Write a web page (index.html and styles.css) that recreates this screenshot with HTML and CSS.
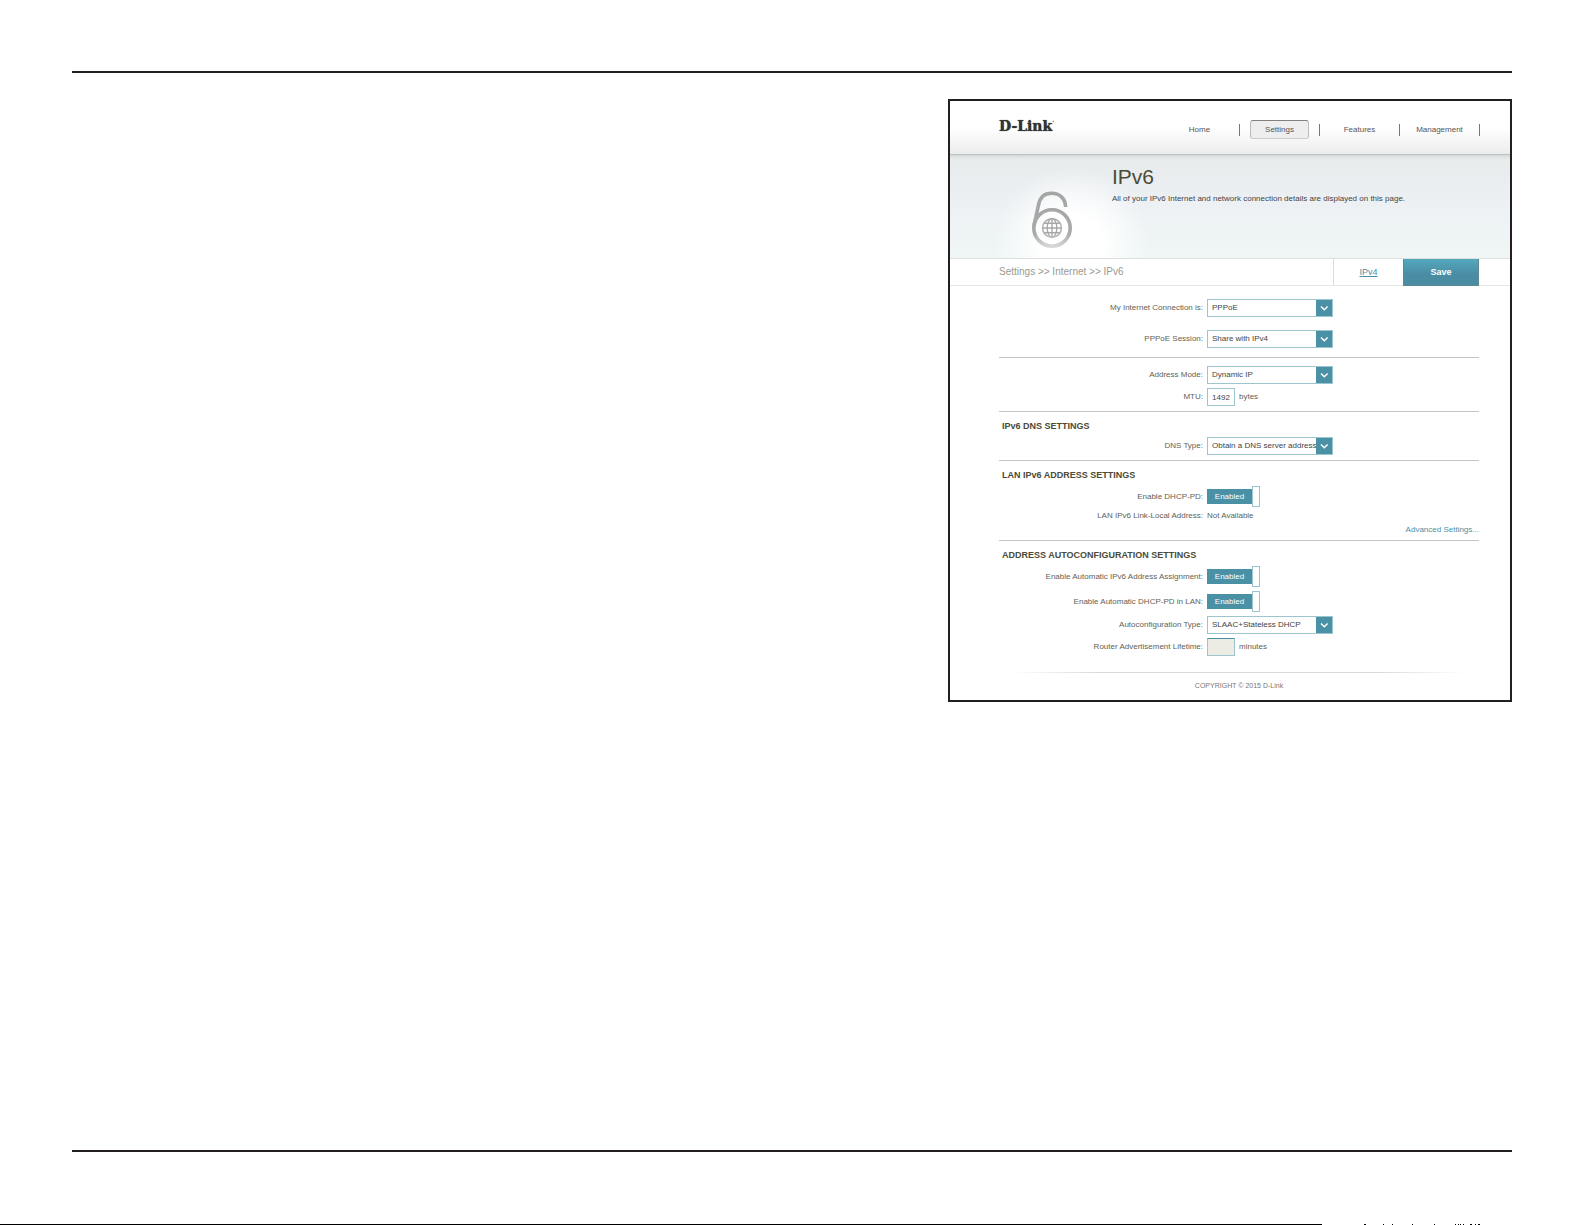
FILE: index.html
```html
<!DOCTYPE html>
<html lang="en">
<head>
<meta charset="UTF-8">
<meta name="viewport" content="width=device-width, initial-scale=1.0">
<title>IPv6</title>
<link rel="stylesheet" href="styles.css">
</head>
<body>
<svg class="defs" width="0" height="0" aria-hidden="true">
    <symbol id="chevron" viewBox="0 0 16 16"><path d="M5 6.5l3.3 3.3 3.3-3.3" fill="none" stroke="#fff" stroke-width="1.4"/></symbol>
</svg>
<main class="page">
<div class="panel">
    <header class="header">
        <a href="#" class="logo">D-Link<sup>’</sup></a>
        <nav>
            <ul class="nav">
                <li><a href="#">Home</a></li>
                <li><a href="#" class="active">Settings</a></li>
                <li><a href="#">Features</a></li>
                <li><a href="#">Management</a></li>
            </ul>
        </nav>
    </header>

    <div class="banner">
        <svg class="banner-icon" viewBox="0 0 40 57" aria-hidden="true">
            <defs>
                <linearGradient id="fade" gradientUnits="userSpaceOnUse" x1="0" y1="0" x2="0" y2="57">
                    <stop offset="0" stop-color="#a5a5a5"/>
                    <stop offset="0.75" stop-color="#a9a9a9"/>
                    <stop offset="1" stop-color="#dcdcdc"/>
                </linearGradient>
            </defs>
            <g fill="none" stroke="url(#fade)">
                <circle cx="20" cy="37" r="18.2" stroke-width="3.6"/>
                <path d="M2 35L6.5 14C8 6 13 2.3 19.5 2.3C28 2.3 33.5 8 33.6 16" stroke-width="3.6"/>
                <g stroke-width="1.4">
                    <circle cx="20" cy="37" r="9.4"/>
                    <ellipse cx="20" cy="37" rx="4.8" ry="9.4"/>
                    <path d="M20 27.6V46.4M10.6 37H29.4M12.2 32.2H27.8M12.2 41.8H27.8"/>
                </g>
            </g>
        </svg>
        <div>
            <h1>IPv6</h1>
            <p>All of your IPv6 Internet and network connection details are displayed on this page.</p>
        </div>
    </div>

    <div class="toolbar">
        <div class="crumbs">Settings &gt;&gt; Internet &gt;&gt; IPv6</div>
        <a href="#" class="ipv4-link"><span>IPv4</span></a>
        <button type="button" class="save-btn">Save</button>
    </div>

    <form class="settings">
        <section class="group group-connection">
            <div class="row">
                <label for="connection">My Internet Connection is:</label>
                <div class="select"><select id="connection"><option>PPPoE</option></select><svg><use href="#chevron"/></svg></div>
            </div>
            <div class="row">
                <label for="session">PPPoE Session:</label>
                <div class="select"><select id="session"><option>Share with IPv4</option></select><svg><use href="#chevron"/></svg></div>
            </div>
        </section>

        <section class="group">
            <div class="row">
                <label for="mode">Address Mode:</label>
                <div class="select"><select id="mode"><option>Dynamic IP</option></select><svg><use href="#chevron"/></svg></div>
            </div>
            <div class="row">
                <label for="mtu">MTU:</label>
                <div class="field"><input type="text" id="mtu" value="1492"> bytes</div>
            </div>
        </section>

        <section class="group">
            <h2>IPv6 DNS SETTINGS</h2>
            <div class="row">
                <label for="dns">DNS Type:</label>
                <div class="select"><select id="dns"><option>Obtain a DNS server address</option></select><svg><use href="#chevron"/></svg></div>
            </div>
        </section>

        <section class="group">
            <h2>LAN IPv6 ADDRESS SETTINGS</h2>
            <div class="row">
                <label for="dhcppd">Enable DHCP-PD:</label>
                <div class="toggle"><span>Enabled</span><input type="checkbox" id="dhcppd" checked></div>
            </div>
            <div class="row">
                <span class="name">LAN IPv6 Link-Local Address:</span>
                <span class="value">Not Available</span>
            </div>
            <a href="#" class="advanced">Advanced Settings...</a>
        </section>

        <section class="group group-last">
            <h2>ADDRESS AUTOCONFIGURATION SETTINGS</h2>
            <div class="row">
                <label for="auto-address">Enable Automatic IPv6 Address Assignment:</label>
                <div class="toggle"><span>Enabled</span><input type="checkbox" id="auto-address" checked></div>
            </div>
            <div class="row">
                <label for="auto-lan">Enable Automatic DHCP-PD in LAN:</label>
                <div class="toggle"><span>Enabled</span><input type="checkbox" id="auto-lan" checked></div>
            </div>
            <div class="row">
                <label for="auto-type">Autoconfiguration Type:</label>
                <div class="select"><select id="auto-type"><option>SLAAC+Stateless DHCP</option></select><svg><use href="#chevron"/></svg></div>
            </div>
            <div class="row">
                <label for="lifetime">Router Advertisement Lifetime:</label>
                <div class="field"><input type="text" id="lifetime" disabled> minutes</div>
            </div>
        </section>
    </form>

    <footer class="copyright">COPYRIGHT © 2015 D-Link</footer>
</div>
</main>

<svg class="page-edge" viewBox="0 0 1585 1" preserveAspectRatio="none" aria-hidden="true">
    <path d="M0 0H1322V1H0zM1364 0h2v1h-2zM1383 0h1v1h-1zM1392 0h1v1h-1zM1412 0h1v1h-1zM1434 0h1v1h-1zM1455 0h1v1h-1zM1458 0h1v1h-1zM1460 0h1v1h-1zM1463 0h1v1h-1zM1470 0h2v1h-2zM1475 0h1v1h-1zM1478 0h2v1h-2z"/>
</svg>
</body>
</html>
```
FILE: styles.css
```css
* {
    box-sizing: border-box;
}
body {
    display: flex;
    flex-direction: column;
    min-height: 100vh;
    margin: 0;
    background-color: #fff;
    color: #5f5f55;
    font-family: "Liberation Sans", Arial, sans-serif;
    font-size: 8px;
    line-height: 10px;
}
h1, h2, p, ul {
    margin: 0;
    padding: 0;
}
.defs {
    position: absolute;
}
.page {
    flex: 1;
    display: grid;
    grid-template-columns: 73fr 47fr;
    align-items: start;
    margin: 71px 73px 72px 72px;
    padding: 26px 0;
    border-top: 2px solid #231f20;
    border-bottom: 2px solid #231f20;
}
.page-edge {
    display: block;
    width: 100%;
    height: 1px;
}
.panel {
    grid-column: 2;
    border: 2px solid #231f20;
}

/* Header */
.header {
    display: flex;
    justify-content: space-between;
    align-items: flex-start;
    padding: 19px 30px 15px 49px;
    background: linear-gradient(#fff 50%, #ececec);
    border-bottom: 1px solid #bcc1c1;
}
.logo {
    color: #333;
    font-family: "DejaVu Serif", serif;
    font-size: 14px;
    font-weight: bold;
    line-height: 12px;
    text-decoration: none;
    text-shadow: 0 0 1px #333;
}
.logo sup {
    font-size: 6px;
    line-height: 0;
    font-weight: normal;
}
.nav {
    display: flex;
    list-style: none;
}
.nav li {
    display: flex;
    align-items: center;
    width: 80px;
}
.nav li::after {
    content: "";
    width: 1px;
    height: 12px;
    background-color: #777;
}
.nav a {
    width: 59px;
    margin: 0 auto;
    border: 1px solid transparent;
    border-radius: 3px;
    color: #555;
    line-height: 17px;
    text-align: center;
    text-decoration: none;
}
.nav .active {
    border-color: #808080 #bbb #ccc;
    background-color: #eee;
}

/* Banner */
.banner {
    display: flex;
    gap: 40px;
    padding: 10px 31px 10px 82px;
    background: radial-gradient(circle at 122px 90px, #fff 30px, rgba(255, 255, 255, 0) 78px),
        linear-gradient(#d3d8d9, #e7ebec 4px, #edf1f4 50%, #eff6f5);
    border-bottom: 1px solid #dcdfdd;
}
.banner-icon {
    flex: none;
    width: 40px;
    height: 57px;
    margin-top: 26px;
}
.banner h1 {
    margin-bottom: 4px;
    color: #4b4b38;
    font-size: 21px;
    font-weight: normal;
    line-height: 24px;
}
.banner p {
    color: #444;
    line-height: 12px;
}

/* Breadcrumb bar */
.toolbar {
    display: flex;
    align-items: stretch;
    height: 27px;
    padding: 0 31px 0 49px;
    box-shadow: inset 0 -1px #e6e6e6;
}
.crumbs {
    flex: 1;
    color: #9a9a94;
    font-size: 10px;
    line-height: 26px;
}
.ipv4-link {
    width: 70px;
    border-left: 1px solid #dcdfdd;
    color: #4a90a4;
    font-size: 9px;
    line-height: 26px;
    text-align: center;
}
.save-btn {
    width: 76px;
    padding: 0;
    border: 1px solid #5d8996;
    border-top: none;
    background: linear-gradient(#54a9be, #4a8ca2 60%);
    color: #fff;
    font: bold 9px "Liberation Sans", Arial, sans-serif;
    cursor: pointer;
}

/* Settings */
.settings {
    padding: 0 31px 0 49px;
}
.group {
    display: flex;
    flex-direction: column;
    gap: 4px;
    padding: 8px 0 5px;
    border-bottom: 1px solid #c4c5c7;
}
.group-connection {
    gap: 13px;
    padding: 13px 0 9px;
}
.group-last {
    border-bottom: none;
}
.group h2 {
    padding-left: 3px;
    color: #4b4b38;
    font-size: 9px;
    line-height: 13px;
}
.row {
    display: grid;
    grid-template-columns: 204px 1fr;
    gap: 4px;
    align-items: center;
}
.row label,
.row .name {
    text-align: right;
}
.select {
    position: relative;
    width: 126px;
    height: 18px;
}
.select select {
    appearance: none;
    width: 100%;
    height: 100%;
    padding: 0 16px 0 4px;
    border: 1px solid #9cc5cd;
    border-radius: 0;
    background-color: #fff;
    color: #444;
    font: inherit;
}
.select svg {
    position: absolute;
    top: 1px;
    right: 1px;
    width: 16px;
    height: 16px;
    background-color: #4a91a5;
    pointer-events: none;
}
.field {
    display: flex;
    align-items: center;
    gap: 4px;
}
.field input {
    width: 28px;
    height: 18px;
    padding: 0 2px;
    border: 1px solid #9cc5cd;
    color: #444;
    font: inherit;
    text-align: center;
}
.field input:disabled {
    border-top-color: #4a91a5;
    background-color: #ecece4;
}
.toggle {
    display: flex;
    align-items: center;
    height: 21px;
}
.toggle span {
    width: 45px;
    background-color: #4a91a5;
    color: #fff;
    line-height: 15px;
    text-align: center;
}
.toggle input {
    appearance: none;
    width: 8px;
    height: 21px;
    margin: 0;
    border: 1px solid #9cc5cd;
    background-color: #fff;
}
.advanced {
    align-self: flex-end;
    color: #4a90a4;
    text-decoration: none;
}

.copyright {
    margin: 11px 45px 0 63px;
    padding: 8px 0 9px;
    border-top: 1px solid;
    border-image: linear-gradient(to right, #fff, #d8d8d8 20%, #d8d8d8 80%, #fff) 1;
    color: #777;
    font-size: 7px;
    text-align: center;
}
```
